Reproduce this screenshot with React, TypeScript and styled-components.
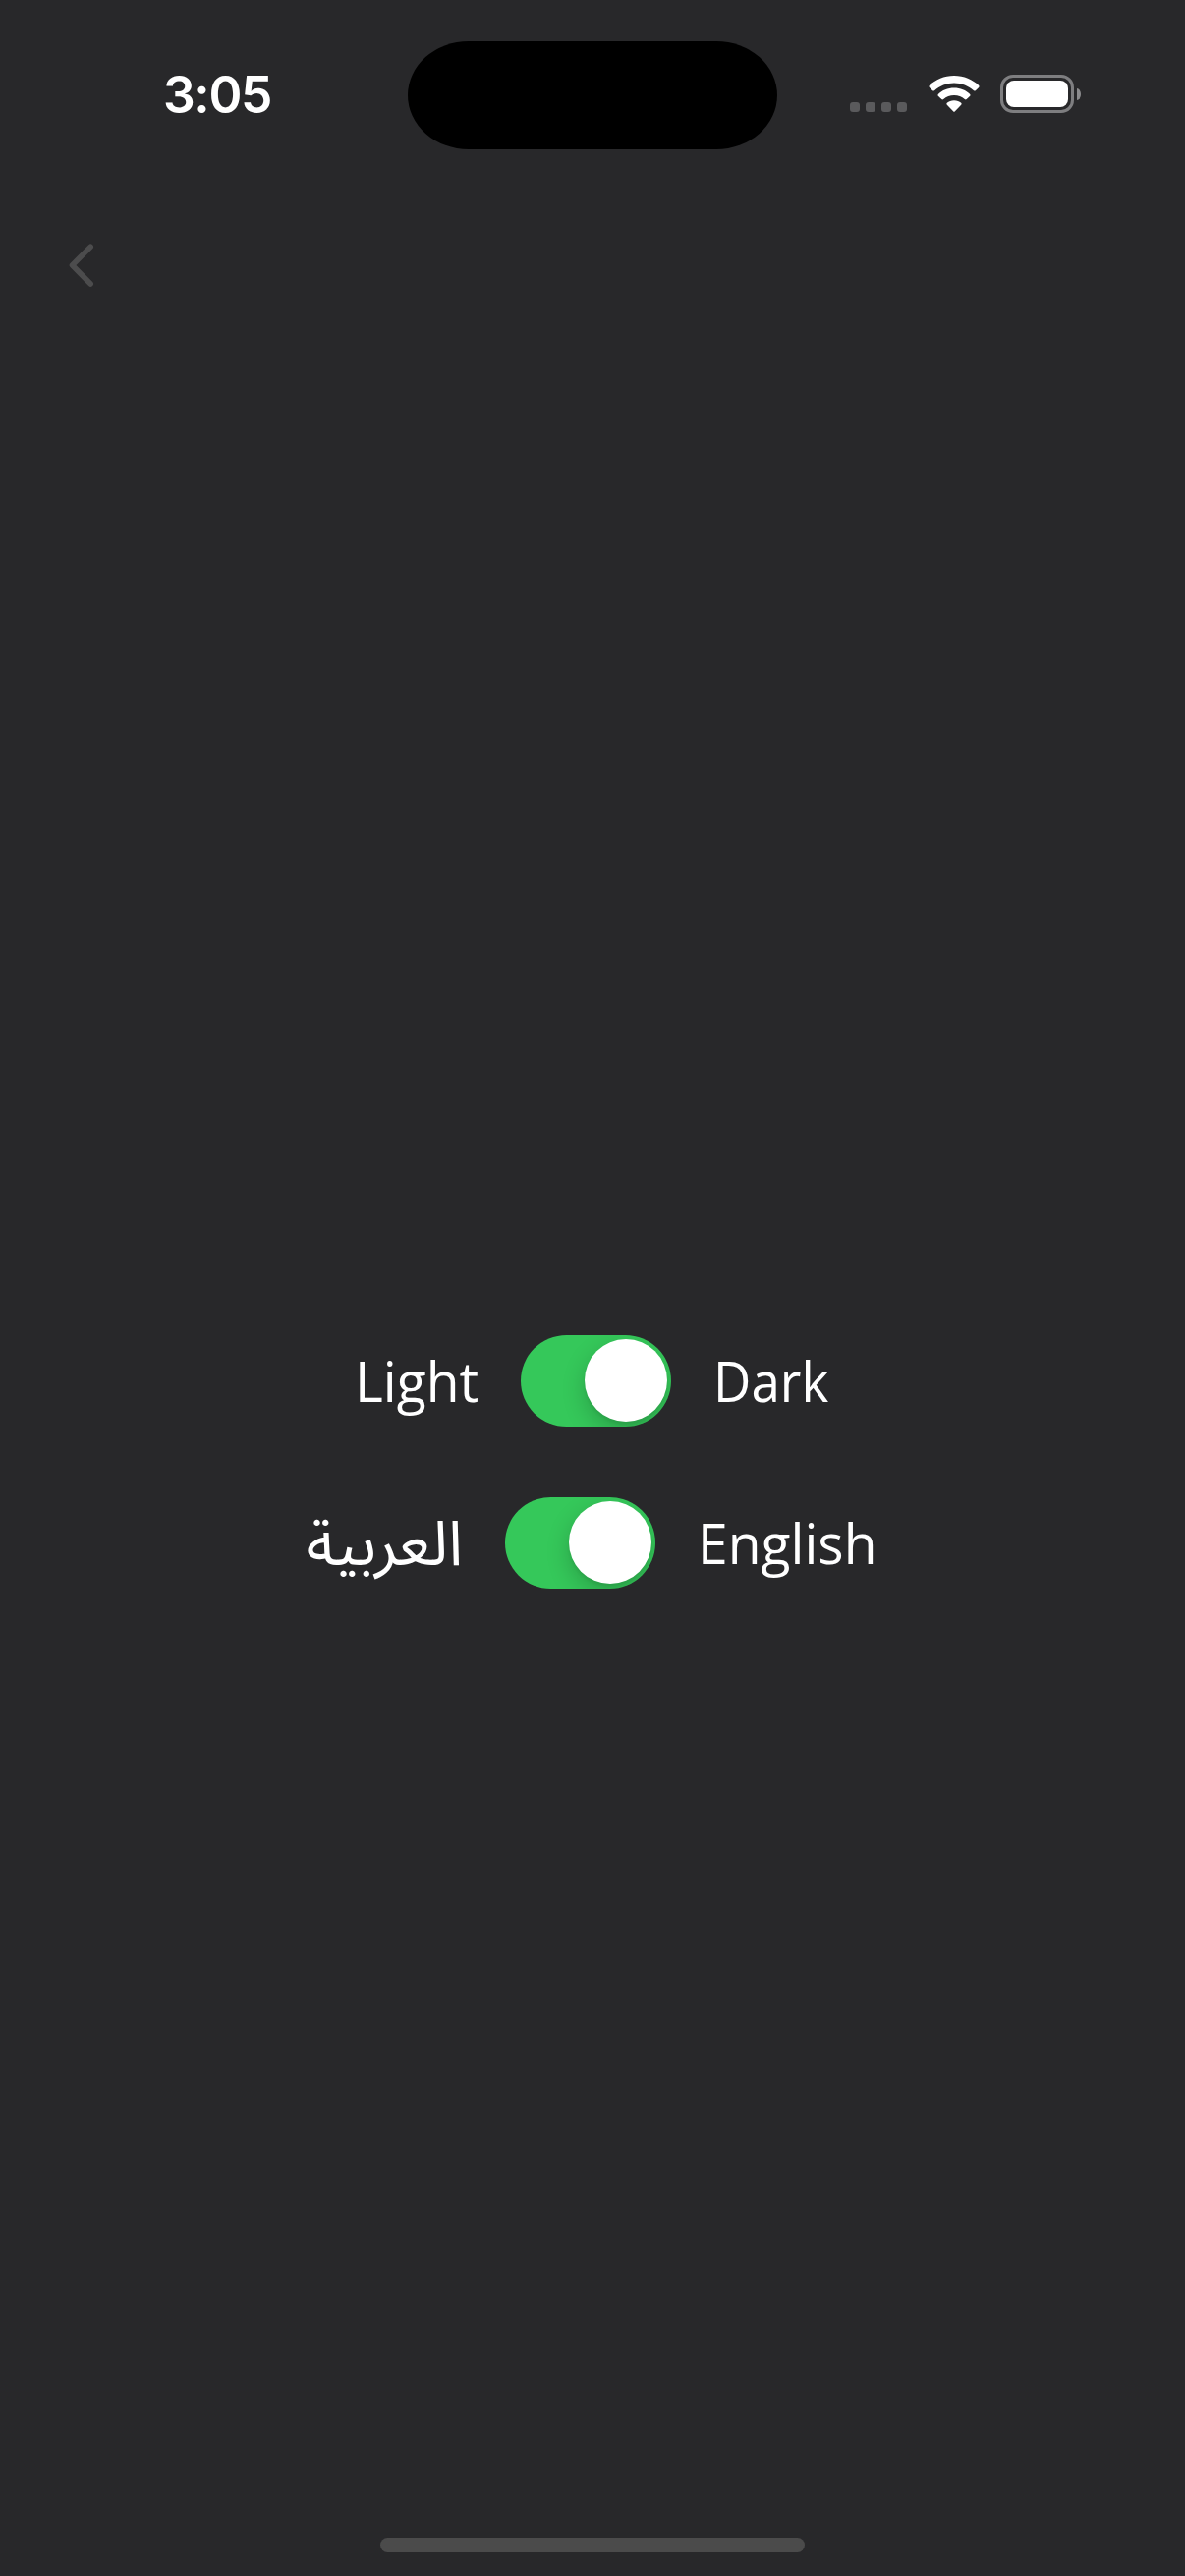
import React from "react";
import styled, { createGlobalStyle } from "styled-components";

const GlobalStyle = createGlobalStyle`
  html, body { margin: 0; background: #28282a; }
  *, *::before, *::after { box-sizing: border-box; }
`;

const Screen = styled.div`
  width: 1206px;
  height: 2622px;
  display: flex;
  flex-direction: column;
  overflow: hidden;
  background: #28282a;
  color: #fff;
`;

const StatusBar = styled.header`
  height: 177px;
  padding-top: 42px;
  display: grid;
  grid-template-columns: 415px 376px 415px;
  align-items: start;
`;

const Time = styled.time`
  height: 108px;
  padding-left: 166px;
  display: flex;
  align-items: center;
  font: 600 51.5px/60px Inter, sans-serif;
  letter-spacing: -1.4px;
`;

const Island = styled.div`
  height: 110px;
  border-radius: 62px / 55px;
  background: #000;
`;

const StatusIcons = styled.div`
  padding: 34px 0 0 74px;
  display: flex;
  align-items: flex-start;
`;

const Signal = styled.div`
  display: flex;
  gap: 6px;
  padding-top: 28px;
  margin-right: 22px;
`;

const SignalDot = styled.span`
  width: 10px;
  height: 10px;
  border-radius: 3px;
  background: #5a5a5c;
`;

const WifiIcon = styled.svg`
  width: 52px;
  height: 39px;
  margin-right: 21px;
`;

const BatteryBody = styled.div`
  width: 75px;
  height: 39px;
  padding: 3px;
  border: 3px solid #7e7e80;
  border-radius: 13px;
`;

const BatteryLevel = styled.div`
  height: 100%;
  border-radius: 8px;
  background: #fff;
`;

const BatteryTip = styled.div`
  width: 4px;
  height: 12px;
  margin: 14px 0 0 3px;
  border-radius: 0 4px 4px 0 / 0 6px 6px 0;
  background: #8b8b8d;
`;

const NavBar = styled.nav`
  height: 186px;
  padding: 66px 0 0 64px;
`;

const BackButton = styled.button`
  display: block;
  padding: 0;
  border: 0;
  background: none;
`;

const Settings = styled.main`
  flex: 1;
  padding-top: 996px;
  display: flex;
  flex-direction: column;
  gap: 72px;
`;

const SettingRow = styled.div<{ $start: number }>`
  height: 93px;
  padding-left: ${(p) => p.$start}px;
  display: flex;
  align-items: center;
`;

const Label = styled.span<{ $width: number; $stretch?: number }>`
  width: ${(p) => p.$width}px;
  height: 93px;
  flex: none;
  font: 500 57.5px/93px "Open Sans", "Noto Sans", sans-serif;
  white-space: nowrap;
  transform: scaleX(${(p) => p.$stretch ?? 1});
  transform-origin: left center;
`;

const ArabicLabel = styled(Label)`
  font: 400 63.5px/98px "Noto Sans Arabic", "DejaVu Sans", sans-serif;
`;

const Switch = styled.button`
  width: 153px;
  height: 93px;
  margin: 0 43px 0 43px;
  padding: 4px 4px 5px;
  flex: none;
  display: flex;
  justify-content: flex-end;
  overflow: hidden;
  border: 0;
  border-radius: 47px;
  background: #35c85a;
`;

const Thumb = styled.span`
  width: 84px;
  height: 84px;
  border-radius: 50%;
  background: #fff;
  box-shadow: 0 9px 24px rgba(0, 0, 0, 0.2), 0 3px 3px rgba(0, 0, 0, 0.06);
`;

const Footer = styled.footer`
  height: 39px;
  display: flex;
  justify-content: center;
  align-items: flex-start;
`;

const HomeIndicator = styled.div`
  width: 432px;
  height: 15px;
  border-radius: 8px;
  background: #4b4b4b;
`;

function Toggle({ name }: { name: string }) {
  return (
    <Switch role="switch" aria-checked="true" aria-label={name}>
      <Thumb />
    </Switch>
  );
}

export default function App() {
  return (
    <>
      <GlobalStyle />
      <Screen>
        <StatusBar>
          <Time>3:05</Time>
          <Island />
          <StatusIcons>
            <Signal>
              {[0, 1, 2, 3].map((n) => (
                <SignalDot key={n} />
              ))}
            </Signal>
            <WifiIcon viewBox="0 0 52 39" fill="#fff">
              <path d="M26 1C36 1 45 5 51.2 11Q52 12 51.2 12.9L47.8 16.2Q47 17 46 16.2C40.5 11.2 33.7 8.4 26 8.4S11.5 11.2 6 16.2Q5 17 4.2 16.2L.8 12.9Q0 12 .8 11C7 5 16 1 26 1Z" />
              <path d="M26 13.6C32.4 13.6 38 16 42.2 19.9Q43 20.8 42.2 21.7L38.7 25.1Q37.8 25.9 36.8 25.1C33.9 22.6 30.2 21.1 26 21.1S18.1 22.6 15.2 25.1Q14.2 25.9 13.3 25.1L9.8 21.7Q9 20.8 9.8 19.9C14 16 19.6 13.6 26 13.6Z" />
              <path d="M26 26.2C28.9 26.2 31.3 27.2 33.2 28.8Q34.2 29.7 33.2 30.7L26.9 37.2Q26 38.2 25.1 37.2L18.8 30.7Q17.8 29.7 18.8 28.8C20.7 27.2 23.1 26.2 26 26.2Z" />
            </WifiIcon>
            <BatteryBody>
              <BatteryLevel />
            </BatteryBody>
            <BatteryTip />
          </StatusIcons>
        </StatusBar>
        <NavBar>
          <BackButton aria-label="Back">
            <svg width="40" height="54" viewBox="0 0 40 54" fill="none">
              <path
                d="M28.2 8.2 9.5 27 28.2 46"
                stroke="#4c4c4d"
                strokeWidth="5.6"
                strokeLinecap="round"
                strokeLinejoin="round"
              />
            </svg>
          </BackButton>
        </NavBar>
        <Settings>
          <SettingRow $start={361}>
            <Label $width={126} $stretch={0.96}>Light</Label>
            <Toggle name="Theme" />
            <Label $width={114} $stretch={0.92}>Dark</Label>
          </SettingRow>
          <SettingRow $start={312}>
            <ArabicLabel $width={159} dir="rtl" lang="ar">
              العربية
            </ArabicLabel>
            <Toggle name="Language" />
            <Label $width={180} $stretch={0.96}>English</Label>
          </SettingRow>
        </Settings>
        <Footer>
          <HomeIndicator />
        </Footer>
      </Screen>
    </>
  );
}
